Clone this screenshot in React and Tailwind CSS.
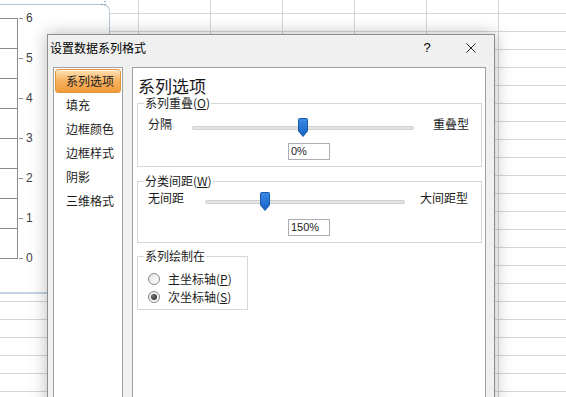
import React from 'react';

const ROWS = Array.from({ length: 22 }, (_, i) => i);
const COLS = Array.from({ length: 6 }, (_, i) => i);
const MENU = ['系列选项', '填充', '边框颜色', '边框样式', '阴影', '三维格式'];
const AXIS = ['6', '5', '4', '3', '2', '1', '0'];

const Thumb = ({ id, className }) => (
    <svg width="10" height="19" viewBox="0 0 10 19" className={`absolute top-0 ${className}`}>
        <defs>
            <linearGradient id={id} x1="0" y1="0" x2="0" y2="1">
                <stop offset="0" stopColor="#3b8be6" />
                <stop offset="1" stopColor="#1560c4" />
            </linearGradient>
        </defs>
        <path d="M1.5 0.5 H8.5 Q9.5 0.5 9.5 1.5 V13 L5 18.5 L0.5 13 V1.5 Q0.5 0.5 1.5 0.5 Z" fill={`url(#${id})`} stroke="#1a5aa8" />
    </svg>
);

const Slider = ({ width, thumbLeft, id }) => (
    <div className={`relative h-[20px] shrink-0 ${width}`}>
        <div className="absolute left-0 right-0 top-[8px] h-[4px] rounded-full bg-[#e4e4e4] border border-[#d0d0d0]" />
        <Thumb id={id} className={thumbLeft} />
    </div>
);

const Radio = ({ checked }) => (
    <span className="w-[12px] h-[12px] rounded-full border border-[#8a8a8a] bg-[linear-gradient(135deg,#e2e2e2,#ffffff)] flex items-center justify-center shrink-0">
        {checked && <span className="w-[6px] h-[6px] rounded-full bg-[radial-gradient(circle_at_35%_35%,#777,#1c1c1c)]" />}
    </span>
);

export default function App() {
    return (
        <div className="relative w-[566px] h-[397px] overflow-hidden bg-white font-['Noto_Sans_CJK_SC',sans-serif] text-[12px] text-[#1b1b1b]">
            {/* sheet rows */}
            <div className="absolute inset-0 flex flex-col pt-[13px]">
                {ROWS.map((r) => (
                    <div key={r} className="h-[18px] shrink-0 border-t border-[#d6d6d6]" />
                ))}
            </div>
            {/* sheet columns */}
            <div className="absolute inset-0 flex pl-[138px]">
                {COLS.map((c) => (
                    <div key={c} className="w-[72px] h-full shrink-0 border-l border-[#d6d6d6]" />
                ))}
            </div>

            {/* chart */}
            <div className="absolute left-[-10px] top-[4px] w-[120px] h-[290px] bg-white border border-[#b6c4d4] border-b-2 border-b-[#c3d3e4] rounded-tr-[7px]" />
            <svg width="8" height="8" viewBox="0 0 8 8" className="absolute left-[100px] top-0">
                <circle cx="5" cy="1.5" r="0.8" fill="#8a98a8" />
                <circle cx="5" cy="4.5" r="0.8" fill="#8a98a8" />
                <circle cx="2" cy="4.5" r="0.8" fill="#8a98a8" />
            </svg>
            <svg width="26" height="270" viewBox="0 0 26 270" className="absolute left-0 top-0">
                {[18, 48, 78, 108, 138, 168, 198, 228, 258].map((y) => (
                    <line key={y} x1="0" y1={y + 0.5} x2="17" y2={y + 0.5} stroke="#8c8c8c" />
                ))}
                <line x1="17.5" y1="18" x2="17.5" y2="259" stroke="#8c8c8c" />
                {[18, 58, 98, 138, 178, 218, 258].map((y) => (
                    <line key={y} x1="19" y1={y + 0.5} x2="23" y2={y + 0.5} stroke="#8c8c8c" />
                ))}
            </svg>
            <div className="absolute left-[26px] top-[-2px] flex flex-col font-['Liberation_Sans',sans-serif] text-[12px] text-[#404040]">
                {AXIS.map((a) => (
                    <div key={a} className="h-[40px] flex items-center">{a}</div>
                ))}
            </div>

            {/* dialog */}
            <div className="absolute left-[47px] top-[34px] w-[448px] h-[380px] flex flex-col bg-[#f0f0f0] border border-[#8e8e8e] shadow-[0_0_16px_rgba(0,0,0,0.28)]">
                <div className="h-[26px] flex items-center pl-[2px] pr-[18px] text-black">
                    <span className="flex-1 leading-[16px]">设置数据系列格式</span>
                    <span className="w-[10px] text-center font-['Liberation_Sans',sans-serif] text-[13px] mr-[34px]">?</span>
                    <svg width="10" height="10" viewBox="0 0 10 10">
                        <path d="M0.5 0.5 L9.5 9.5 M9.5 0.5 L0.5 9.5" stroke="#222" strokeWidth="1" />
                    </svg>
                </div>

                <div className="flex flex-1 pt-[6px] pl-[5px] pr-[8px] gap-[9px]">
                    {/* category list */}
                    <div className="w-[70px] shrink-0 bg-white border border-[#a0a0a0] p-[1px] flex flex-col">
                        {MENU.map((m, i) => (
                            <div
                                key={m}
                                className={`h-[24px] flex items-center pl-[10px] border rounded-[3px] leading-[16px] ${i === 0 ? 'border-[#e0963f] bg-[linear-gradient(to_bottom,#fde2b6,#f8b566_45%,#f29a38)] shadow-[inset_0_1px_0_rgba(255,255,255,0.6)] text-[#222]' : 'border-transparent'}`}
                            >
                                {m}
                            </div>
                        ))}
                    </div>

                    {/* options panel */}
                    <div className="flex-1 bg-white border border-[#a0a0a0] pt-[8px] pl-[4px] pr-[3px] flex flex-col">
                        <div className="h-[20px] pl-[1px] text-[17px] leading-[20px] text-[#1a1a1a]">系列选项</div>

                        <fieldset className="border border-[#d7d7d7] pb-[6px]">
                            <legend className="ml-[6px] px-[1px] leading-[14px]">系列重叠(<span className="underline">O</span>)</legend>
                            <div className="flex items-start mt-[8px] pl-[10px]">
                                <span className="w-[44px] leading-[16px] mt-[-2px]">分隔</span>
                                <Slider width="w-[222px]" thumbLeft="left-[106px]" id="t1" />
                                <span className="ml-[19px] leading-[16px] mt-[-2px]">重叠型</span>
                            </div>
                            <div className="mt-[5px] ml-[150px] w-[42px] h-[17px] border border-[#abadb3] bg-white pl-[2px] font-['Liberation_Sans',sans-serif] text-[11px] leading-[15px]">0%</div>
                        </fieldset>

                        <fieldset className="mt-[7px] border border-[#d7d7d7] pb-[6px]">
                            <legend className="ml-[6px] px-[1px] leading-[14px]">分类间距(<span className="underline">W</span>)</legend>
                            <div className="flex items-start mt-[4px] pl-[10px]">
                                <span className="w-[57px] leading-[16px] mt-[-2px]">无间距</span>
                                <Slider width="w-[200px]" thumbLeft="left-[55px]" id="t2" />
                                <span className="ml-[15px] leading-[16px] mt-[-2px]">大间距型</span>
                            </div>
                            <div className="mt-[7px] ml-[150px] w-[42px] h-[17px] border border-[#abadb3] bg-white pl-[2px] font-['Liberation_Sans',sans-serif] text-[11px] leading-[15px]">150%</div>
                        </fieldset>

                        <fieldset className="mt-[6px] w-[111px] border border-[#d7d7d7] pb-[3px]">
                            <legend className="ml-[6px] px-[1px] leading-[14px]">系列绘制在</legend>
                            <div className="mt-[7px] h-[18px] pl-[10px] flex items-center gap-[8px]">
                                <Radio />
                                <span className="leading-[16px]">主坐标轴(<span className="underline">P</span>)</span>
                            </div>
                            <div className="h-[18px] pl-[10px] flex items-center gap-[8px]">
                                <Radio checked />
                                <span className="leading-[16px]">次坐标轴(<span className="underline">S</span>)</span>
                            </div>
                        </fieldset>
                    </div>
                </div>
            </div>
        </div>
    );
}
